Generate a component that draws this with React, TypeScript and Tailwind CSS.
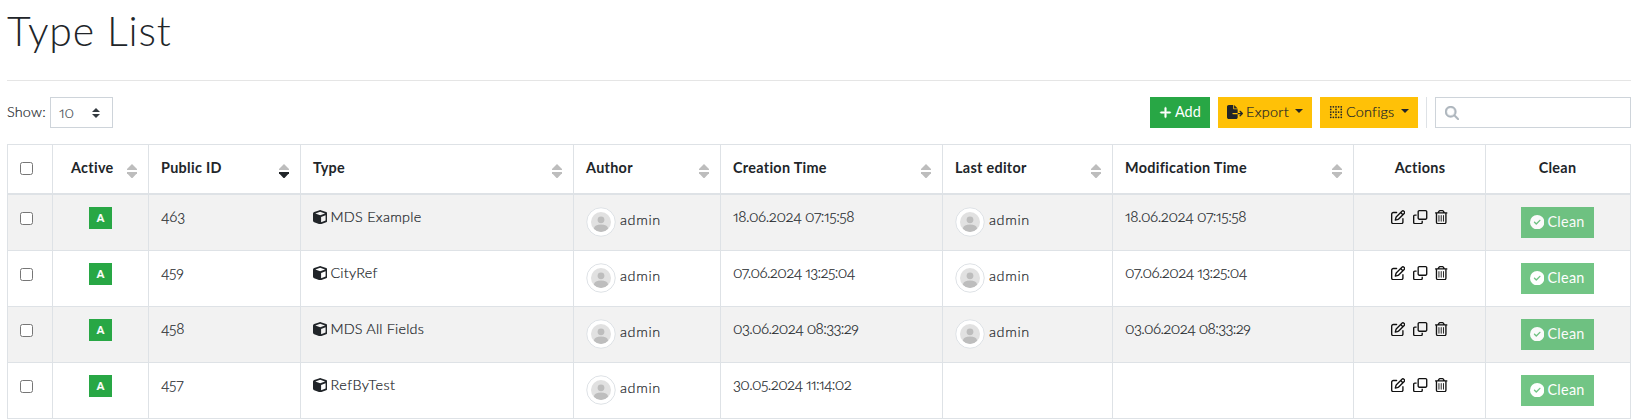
import type { ReactNode } from "react";
import {
  FaBorderNone,
  FaCircleCheck,
  FaCube,
  FaFileExport,
  FaMagnifyingGlass,
  FaPlus,
  FaRegClone,
  FaRegPenToSquare,
  FaRegTrashCan,
} from "react-icons/fa6";

type SortState = "none" | "desc";

interface TypeRow {
  id: string;
  name: string;
  nameClass: string;
  created: string;
  createdClass: string;
  modified?: string;
}

const rows: TypeRow[] = [
  { id: "463", name: "MDS Example", nameClass: "tracking-[0.3px]", created: "18.06.2024 07:15:58", createdClass: "tracking-[-0.42px]", modified: "18.06.2024 07:15:58" },
  { id: "459", name: "CityRef", nameClass: "tracking-[0.25px]", created: "07.06.2024 13:25:04", createdClass: "tracking-[-0.6px]", modified: "07.06.2024 13:25:04" },
  { id: "458", name: "MDS All Fields", nameClass: "tracking-[0.2px]", created: "03.06.2024 08:33:29", createdClass: "tracking-[-0.6px]", modified: "03.06.2024 08:33:29" },
  { id: "457", name: "RefByTest", nameClass: "tracking-[0.5px]", created: "30.05.2024 11:14:02", createdClass: "tracking-[-0.6px]" },
];

const cell = "border-r border-b border-[#dee2e6] px-3 pt-3 align-top";
const oldStyle = "[font-variant-numeric:oldstyle-nums_proportional-nums]";
const numberText = "-mt-[2px] whitespace-nowrap text-[15px] [font-variant-numeric:oldstyle-nums_proportional-nums]";

function SortIcon({ state = "none" }: { state?: SortState }) {
  return (
    <svg viewBox="0 0 10 14" className="mt-[7px] h-[14px] w-[10px] shrink-0">
      <path d="M5 0 10 5V6H0V5Z" fill="#bdbdbd" />
      <path d="M0 8H10V9.2L5.5 14H4.5L0 9.2Z" fill={state === "desc" ? "#212529" : "#bdbdbd"} />
    </svg>
  );
}

function Header({ children, sort, className = "" }: { children: ReactNode; sort?: SortState; className?: string }) {
  return (
    <th className="h-[50px] border-r border-b-2 border-[#dee2e6] pt-[12px] pr-[11px] pl-3 text-left align-top font-bold tracking-[0.3px] [-webkit-text-stroke:0]">
      <div className={`flex justify-between ${className}`}>
        <span className="whitespace-nowrap">{children}</span>
        {sort && <SortIcon state={sort} />}
      </div>
    </th>
  );
}

function Check() {
  return <span className="block size-[13px] rounded-[2.5px] border border-[#767676] bg-white" />;
}

function Caret() {
  return <span className="mr-[9px] mb-[2px] ml-auto inline-block border-x-4 border-t-4 border-x-transparent border-t-[#212529]" />;
}

function User() {
  return (
    <div className="flex items-start">
      <svg viewBox="0 0 30 30" className="size-[30px]">
        <defs>
          <clipPath id="face">
            <circle cx="15" cy="15" r="10" />
          </clipPath>
        </defs>
        <circle cx="15" cy="15" r="14.25" fill="#fff" stroke="#dee2e6" />
        <circle cx="15" cy="15" r="10" fill="#e1e1e1" />
        <g clipPath="url(#face)" fill="#bdbdbd">
          <circle cx="15" cy="12.8" r="3.4" />
          <ellipse cx="15" cy="21.3" rx="7" ry="3.8" />
        </g>
      </svg>
      <span className="mt-[2px] ml-1 tracking-[0.65px]">admin</span>
    </div>
  );
}

export default function App() {
  return (
    <main className="h-[419px] overflow-hidden bg-white pl-[7px] font-['Lato','Open_Sans',sans-serif] text-[14.4px] leading-[22px] font-light text-[#212529] [-webkit-text-stroke:0.2px]">
      <h1 className="h-[80px] pt-[7px] text-[41px] leading-[48px] font-light tracking-[0.85px] [-webkit-text-stroke:0]">Type List</h1>
      <div className="h-px w-[1624px] bg-[#e5e5e5]" />

      <div className="mt-4 flex h-[31px] w-[1624px] items-center">
        <span className="w-[43px] pb-[2px] tracking-[0.2px] whitespace-nowrap">Show:</span>
        <div className="flex h-[31px] w-[63px] items-center justify-between border border-[#ced4da] pr-[12px] pl-2 text-[#495057]">
          <span className={`pb-[2px] text-[15px] ${oldStyle}`}>10</span>
          <svg viewBox="0 0 8 10" className="h-[10px] w-2" fill="#343a40">
            <path d="M4 0 8 4H0ZM4 10 0 6H8Z" />
          </svg>
        </div>

        <div className="ml-auto flex h-[31px]">
          <button className="flex w-[60px] items-center bg-[#28a745] pb-px pl-[9px] font-normal text-white [-webkit-text-stroke:0]">
            <FaPlus className="mr-[3px] size-[13px]" stroke="currentColor" strokeWidth="18" />
            Add
          </button>
          <button className="ml-2 flex w-[94px] items-center bg-[#ffc107] pb-px pl-[9px] tracking-[0.3px]">
            <FaFileExport className="mr-[3px] size-[16px]" />
            Export
            <Caret />
          </button>
          <button className="ml-2 flex w-[98px] items-center bg-[#ffc107] pb-px pl-[9px] tracking-[0.2px]">
            <FaBorderNone className="mr-[3px] size-[14px]" />
            Configs
            <Caret />
          </button>
          <div className="ml-2 w-px bg-[#dee2e6]" />
          <div className="ml-2 flex w-[196px] items-center border border-[#ced4da] pl-[9px]">
            <FaMagnifyingGlass className="size-[14px] text-[#adb5bd]" stroke="currentColor" strokeWidth="16" />
          </div>
        </div>
      </div>

      <table className="mt-4 w-[1624px] table-fixed border-separate border-spacing-0 border-t border-l border-[#dee2e6]">
        <colgroup>
          <col className="w-[45px]" />
          <col className="w-[96px]" />
          <col className="w-[152px]" />
          <col className="w-[273px]" />
          <col className="w-[147px]" />
          <col className="w-[222px]" />
          <col className="w-[170px]" />
          <col className="w-[241px]" />
          <col className="w-[132px]" />
          <col className="w-[145px]" />
        </colgroup>
        <thead>
          <tr>
            <Header className="pt-[5px]"><Check /></Header>
            <Header sort="none" className="pl-[6px]">Active</Header>
            <Header sort="desc">Public ID</Header>
            <Header sort="none">Type</Header>
            <Header sort="none">Author</Header>
            <Header sort="none">Creation Time</Header>
            <Header sort="none">Last editor</Header>
            <Header sort="none">Modification Time</Header>
            <Header className="justify-center!">Actions</Header>
            <Header className="justify-center! pr-[2px]">Clean</Header>
          </tr>
        </thead>
        <tbody>
          {rows.map((row) => (
            <tr key={row.id} className="h-[56px] odd:bg-[#f2f2f2]">
              <td className={cell}>
                <div className="pt-[5px]"><Check /></div>
              </td>
              <td className={cell}>
                <div className="mx-auto flex h-[22px] w-[23px] items-center justify-center bg-[#28a745] text-[10.8px] font-bold text-white">A</div>
              </td>
              <td className={cell}><div className={`${numberText} tracking-[-0.2px]`}>{row.id}</div></td>
              <td className={cell}>
                <div className="-mt-px flex items-center">
                  <FaCube className="mr-[3px] size-[14.4px]" />
                  <span className={row.nameClass}>{row.name}</span>
                </div>
              </td>
              <td className={cell}><User /></td>
              <td className={cell}><div className={`${numberText} ${row.createdClass}`}>{row.created}</div></td>
              <td className={cell}>{row.modified && <User />}</td>
              <td className={cell}><div className={`${numberText} ${row.createdClass}`}>{row.modified}</div></td>
              <td className={cell}>
                <div className="flex h-[20px] items-center pl-[25px] text-[#111]">
                  <FaRegPenToSquare className="size-[14.4px]" />
                  <FaRegClone className="ml-2 size-[14.4px]" />
                  <FaRegTrashCan className="ml-[6px] size-[14.4px]" />
                </div>
              </td>
              <td className={cell}>
                <button className="ml-[23px] flex h-[31px] w-[73px] items-center bg-[#28a745] pb-px pl-[9px] font-normal text-white opacity-65 [-webkit-text-stroke:0]">
                  <FaCircleCheck className="mr-[3px] size-[14.4px]" />
                  <span className="tracking-[0.3px]">Clean</span>
                </button>
              </td>
            </tr>
          ))}
        </tbody>
      </table>
    </main>
  );
}
